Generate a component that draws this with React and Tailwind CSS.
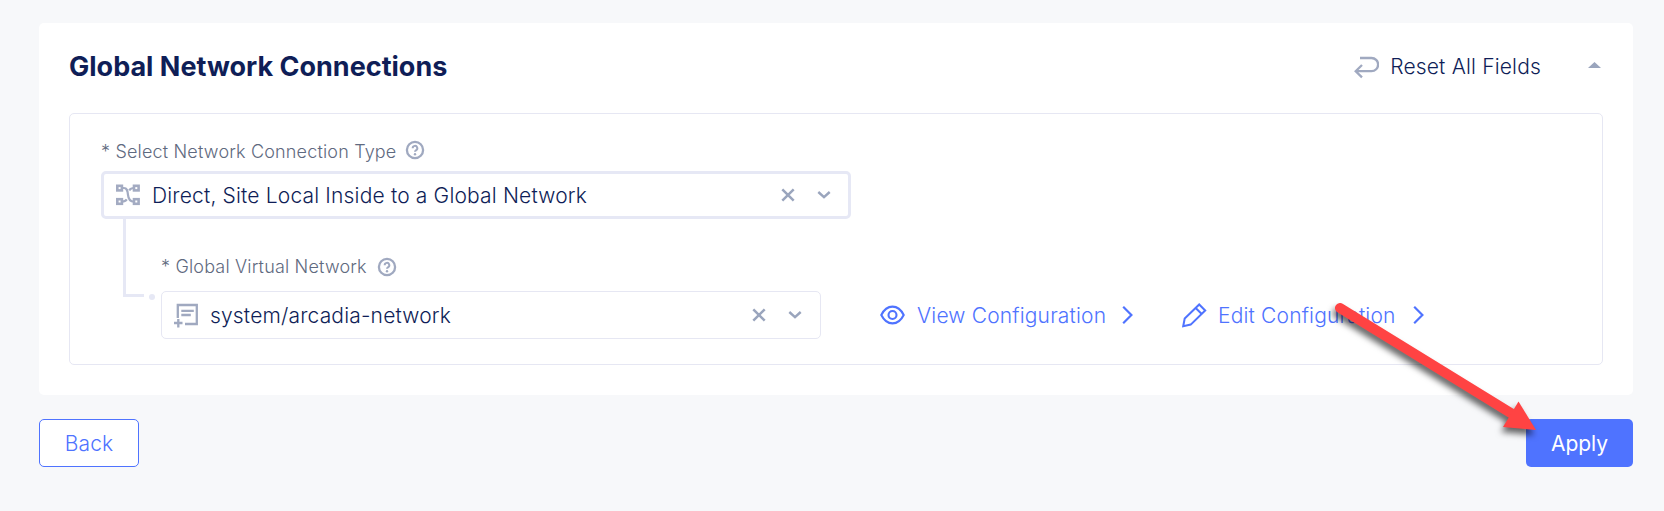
import React from "react";

const Help = () => (
  <svg className="block size-5 shrink-0" viewBox="0 0 20 20" fill="none">
    <circle cx="10" cy="10" r="8.1" stroke="#a0a9c0" strokeWidth="2.3" />
    <path d="M7.700 8.200a2.300 2.300 0 1 1 3.500 1.900c-.8.5-1.200.9-1.200 1.700" stroke="#a0a9c0" strokeWidth="2" />
    <circle cx="10" cy="14.200" r="1.200" fill="#a0a9c0" />
  </svg>
);

const Clear = () => (
  <svg className="block size-4 shrink-0" viewBox="0 0 16 16" fill="none" stroke="#9aa5bd" strokeWidth="2.500">
    <path d="M2.300 2.300 13.700 13.700M13.700 2.300 2.300 13.700" />
  </svg>
);

const Caret = () => (
  <svg className="block size-4 shrink-0" viewBox="0 0 16 16" fill="none" stroke="#9aa5bd" strokeWidth="2.400">
    <path d="M2.300 5 8 10.200 13.700 5" />
  </svg>
);

const Chevron = () => (
  <svg className="block h-5 w-3 shrink-0" viewBox="0 0 12 20" fill="none" stroke="#4f73ff" strokeWidth="2.200">
    <path d="M1.200 1.800 9.400 10 1.200 18.200" />
  </svg>
);

const NetworkIcon = () => (
  <svg className="block h-[22px] w-6 shrink-0" viewBox="0 0 24 22" fill="none" stroke="#a3abc2" strokeWidth="2.600">
    <rect x="1.300" y="1.800" width="4.600" height="4.600" />
    <rect x="1.300" y="15.200" width="4.600" height="4.600" />
    <rect x="18" y="1.800" width="4.600" height="4.600" />
    <rect x="18" y="15.200" width="4.600" height="4.600" />
    <path strokeWidth="2.200" d="M6 4h1.800c3.200 0 3.800 2.500 4.200 6.800S14.400 17.600 18 17.600M6 17.600c2.600 0 3.800-.8 4.800-2.300M18 4c-2.600 0-3.800.8-4.800 2.300" />
  </svg>
);

const DocIcon = () => (
  <svg className="block size-[25px] shrink-0" viewBox="0 0 25 25" fill="none" stroke="#a0a9c0" strokeWidth="2.300">
    <path d="M3.800 15V2h19v19H11" />
    <path d="M7.300 7.800h12.500M7.300 12h9.500M0 20h8.500M4.300 16v8.500" />
  </svg>
);

function Select({ icon, value, className }) {
  return (
    <div className={`flex h-12 items-center rounded-[5px] bg-white ${className}`}>
      {icon}
      <span className="grow whitespace-nowrap pt-px text-[21px] leading-[30px] text-[#0f1e57]">{value}</span>
      <Clear />
      <div className="w-5" />
      <Caret />
    </div>
  );
}

export default function App() {
  return (
    <div className="relative h-[511px] w-[1664px] overflow-hidden bg-[#f7f8fa] px-[39px] pt-[23px] font-['Inter','Liberation_Sans',sans-serif] font-light tracking-[0.17px]">
      <section className="h-[372px] w-[1594px] rounded-[5px] bg-white px-[30px]">
        <header className="flex h-[90px] items-center">
          <h2 className="grow pb-[2px] text-[27px] leading-9 font-bold tracking-normal text-[#0f1e57]">Global Network Connections</h2>
          <div className="flex items-center pb-[2px]">
            <svg className="block h-6 w-[25px]" viewBox="0 0 25 24" fill="none" stroke="#a0a9c0" strokeWidth="2.300">
              <path d="M6 3h11.500a6.600 6.600 0 0 1 0 13.200H1.600M8 10 1.700 16.200 8 22.400" />
            </svg>
            <span className="ml-[11px] text-[21px] leading-[30px] whitespace-nowrap text-[#0f1e57]">Reset All Fields</span>
            <svg className="mr-[2px] mb-1 ml-[47px] block h-[6px] w-[13px]" viewBox="0 0 13 6">
              <path d="M0 6 6.500 0 13 6Z" fill="#9aa5bd" />
            </svg>
          </div>
        </header>
        <div className="h-[252px] w-[1534px] rounded-[5px] border border-[#e6e7f3] pt-[26px] pl-[31px]">
          <div className="flex h-[31px] items-start">
            <span className="pt-px text-[18px] leading-[22px] whitespace-nowrap text-[#5f6a80]">* Select Network Connection Type</span>
            <div className="ml-[9px]"><Help /></div>
          </div>
          <Select
            className="w-[750px] border-[3px] border-[#e6e8f5] pr-4 pl-3"
            icon={<div className="mr-3"><NetworkIcon /></div>}
            value="Direct, Site Local Inside to a Global Network"
          />
          <div className="flex pl-[22px]">
            <div className="h-[78px] w-[21px] border-b-[3px] border-l-[3px] border-[#e6e8f5]" />
            <div className="mt-[75px] ml-[5px] size-[6px] rounded-full bg-[#e6e8f5]" />
            <div className="ml-[6px]">
              <div className="flex h-[72px] items-start pt-[37px]">
                <span className="text-[18px] leading-[22px] whitespace-nowrap text-[#5f6a80]">* Global Virtual Network</span>
                <div className="mt-px ml-[10px]"><Help /></div>
              </div>
              <div className="flex items-center">
                <Select
                  className="w-[660px] border border-[#e6e7f3] pr-[17px] pl-3"
                  icon={<div className="mr-[11px]"><DocIcon /></div>}
                  value="system/arcadia-network"
                />
                <a className="ml-[59px] flex items-center text-[21px] leading-[30px] whitespace-nowrap text-[#4f73ff]">
                  <svg className="mr-3 block h-5 w-[25px]" viewBox="0 0 25 20" fill="none" stroke="#4f73ff" strokeWidth="2.100">
                    <path d="M1.300 10C4 4.500 8 1.600 12.500 1.600S21 4.500 23.700 10C21 15.500 17 18.400 12.500 18.400S4 15.500 1.300 10Z" />
                    <circle cx="12.500" cy="10" r="4" />
                  </svg>
                  <span className="mr-4 w-[189px] pt-px">View Configuration</span>
                  <Chevron />
                </a>
                <a className="ml-12 flex items-center text-[21px] leading-[30px] whitespace-nowrap text-[#4f73ff]">
                  <svg className="mr-[11px] block size-[25px]" viewBox="0 0 25 25" fill="none" stroke="#4f73ff" strokeWidth="2">
                    <path d="M1.200 23.300 2.700 15.500 17.200 1.500 23.200 7.500 8.700 21.600ZM13.700 5l6 6" />
                  </svg>
                  <span className="mr-4 w-[179px] pt-px">Edit Configuration</span>
                  <Chevron />
                </a>
              </div>
            </div>
          </div>
        </div>
      </section>
      <div className="mt-6 flex w-[1594px] justify-between text-[21px]">
        <button className="h-12 w-[100px] rounded-[5px] border border-[#4f73ff] bg-white pt-px text-[#4f73ff]">Back</button>
        <button className="h-12 w-[107px] rounded-[5px] bg-[#4f73ff] pt-px font-normal tracking-normal text-white">Apply</button>
      </div>
      <svg className="absolute top-[290px] left-[1320px] h-[160px] w-[240px] drop-shadow-[-2px_5px_3px_rgba(0,0,0,0.6)]" viewBox="1320 290 240 160">
        <path d="M1340 308 1514 415" stroke="#ff4343" strokeWidth="10" strokeLinecap="round" />
        <path d="M1536 430 1518.500 401.500 1503 427Z" fill="#ff4343" />
      </svg>
    </div>
  );
}
